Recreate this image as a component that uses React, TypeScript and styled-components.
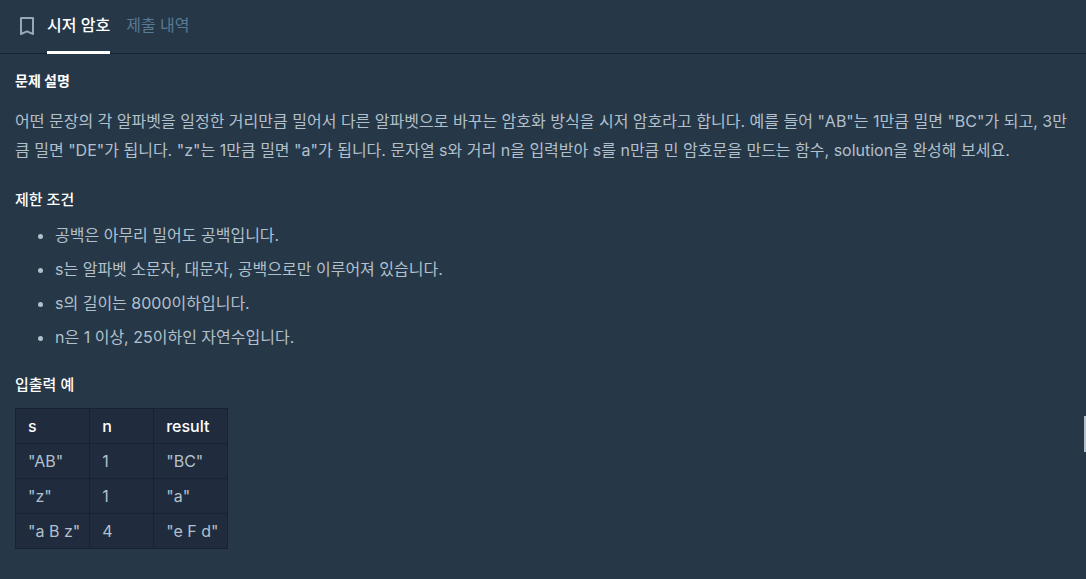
import React from "react";
import styled, { createGlobalStyle } from "styled-components";

const GlobalStyle = createGlobalStyle`
  * { box-sizing: border-box; }
  body {
    margin: 0;
    background: #263747;
    color: #b2c0cc;
    font-family: Inter, "Noto Sans CJK KR", sans-serif;
    font-size: 16px;
    line-height: 24px;
  }
`;

const Page = styled.div`
  display: flex;
  min-height: 100vh;
`;

const Panel = styled.div`
  flex: 1;
  min-width: 0;
`;

const TabBar = styled.header`
  display: flex;
  height: 54px;
  padding-left: 15px;
  border-bottom: 1px solid #172334;
`;

const BookmarkButton = styled.button`
  display: flex;
  align-items: center;
  justify-content: center;
  width: 24px;
  height: 52px;
  margin-right: 8px;
  padding: 0;
  border: 0;
  background: none;
  color: #98a8b9;
  cursor: pointer;
`;

const Tabs = styled.nav`
  display: flex;
  gap: 16px;
`;

const Tab = styled.a<{ $active?: boolean }>`
  height: 54px;
  padding-top: 13px;
  border-bottom: 3px solid ${(p) => (p.$active ? "#ffffff" : "transparent")};
  color: ${(p) => (p.$active ? "#ffffff" : "#587a94")};
  font-weight: ${(p) => (p.$active ? 500 : 400)};
  text-decoration: none;
`;

const Content = styled.main`
  padding: 15px 16px 31px 15px;
`;

const Title = styled.h1`
  margin: 0 0 14px;
  color: #ffffff;
  font-size: 14px;
  line-height: 24px;
  font-weight: 700;
`;

const Description = styled.p`
  margin: 0 0 23px;
  line-height: 29px;
`;

const Heading = styled.h2`
  margin: 0;
  color: #ffffff;
  font-size: 15px;
  line-height: 24px;
  font-weight: 500;
`;

const Conditions = styled.ul`
  margin: 6px 0 19px;
  padding-left: 40px;
  line-height: 34px;
`;

const Table = styled.table`
  margin-top: 11px;
  border-collapse: collapse;
  background: #202b3d;
`;

const cell = `
  min-width: 64px;
  padding: 5px 9px 5px 12px;
  border: 1px solid #172334;
  text-align: left;
`;

const HeadCell = styled.th`
  ${cell}
  color: #ffffff;
  font-weight: 500;
`;

const Cell = styled.td`
  ${cell}
`;

const ResizeHandle = styled.div`
  position: fixed;
  right: 0;
  top: 75%;
  width: 2px;
  height: 36px;
  transform: translateY(-50%);
  background: #b2c0cc;
`;

const conditions = [
  "공백은 아무리 밀어도 공백입니다.",
  "s는 알파벳 소문자, 대문자, 공백으로만 이루어져 있습니다.",
  "s의 길이는 8000이하입니다.",
  "n은 1 이상, 25이하인 자연수입니다.",
];

const examples = [
  ['"AB"', "1", '"BC"'],
  ['"z"', "1", '"a"'],
  ['"a B z"', "4", '"e F d"'],
];

export default function App() {
  return (
    <Page lang="ko">
      <GlobalStyle />
      <Panel>
        <TabBar>
          <BookmarkButton type="button" aria-label="북마크">
            <svg width="24" height="24" viewBox="0 0 24 24" fill="none" stroke="currentColor" strokeWidth="2" strokeLinejoin="round">
              <path d="M6 4H18V20L12 17.4L6 20Z" />
            </svg>
          </BookmarkButton>
          <Tabs>
            <Tab href="#problem" $active aria-current="page">시저 암호</Tab>
            <Tab href="#submissions">제출 내역</Tab>
          </Tabs>
        </TabBar>
        <Content>
          <Title>문제 설명</Title>
          <Description>
            어떤 문장의 각 알파벳을 일정한 거리만큼 밀어서 다른 알파벳으로 바꾸는 암호화 방식을 시저 암호라고 합니다. 예를 들어 "AB"는 1만큼 밀면 "BC"가 되고, 3만큼 밀면 "DE"가 됩니다. "z"는 1만큼 밀면 "a"가 됩니다. 문자열 s와 거리 n을 입력받아 s를 n만큼 민 암호문을 만드는 함수, solution을 완성해 보세요.
          </Description>
          <Heading>제한 조건</Heading>
          <Conditions>
            {conditions.map((text) => (
              <li key={text}>{text}</li>
            ))}
          </Conditions>
          <Heading>입출력 예</Heading>
          <Table>
            <thead>
              <tr>
                <HeadCell scope="col">s</HeadCell>
                <HeadCell scope="col">n</HeadCell>
                <HeadCell scope="col">result</HeadCell>
              </tr>
            </thead>
            <tbody>
              {examples.map((row) => (
                <tr key={row[0]}>
                  {row.map((value, i) => (
                    <Cell key={i}>{value}</Cell>
                  ))}
                </tr>
              ))}
            </tbody>
          </Table>
        </Content>
      </Panel>
      <ResizeHandle />
    </Page>
  );
}
